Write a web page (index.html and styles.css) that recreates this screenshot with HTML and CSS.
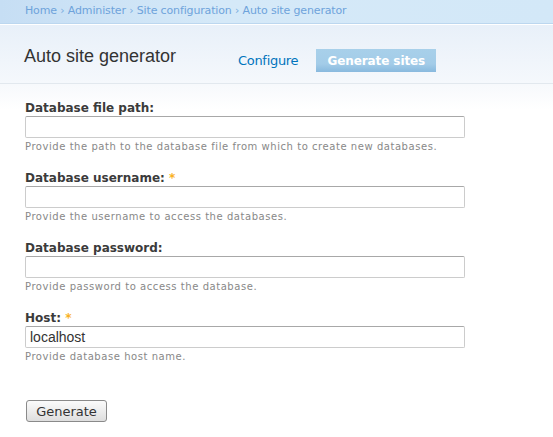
FILE: index.html
```html
<!DOCTYPE html>
<html>
<head>
<meta charset="utf-8">
<link rel="stylesheet" href="styles.css">
</head>
<body>
<div class="breadcrumb">
  <a href="#">Home</a> › <a href="#">Administer</a> › <a href="#">Site configuration</a> › <a href="#">Auto site generator</a>
</div>
<div class="header">
  <h1 class="title">Auto site generator</h1>
  <ul class="tabs">
    <li><a href="#">Configure</a></li>
    <li class="active"><a href="#">Generate sites</a></li>
  </ul>
</div>
<form class="content">
  <div class="item">
    <label class="label">Database file path:</label>
    <input class="text" type="text">
    <div class="desc">Provide the path to the database file from which to create new databases.</div>
  </div>
  <div class="item">
    <label class="label">Database username: <span class="req">*</span></label>
    <input class="text" type="text">
    <div class="desc">Provide the username to access the databases.</div>
  </div>
  <div class="item">
    <label class="label">Database password:</label>
    <input class="text" type="password">
    <div class="desc">Provide password to access the database.</div>
  </div>
  <div class="item">
    <label class="label">Host: <span class="req">*</span></label>
    <input class="text" type="text" value="localhost">
    <div class="desc">Provide database host name.</div>
  </div>
  <div class="actions">
    <button class="btn" type="button">Generate</button>
  </div>
</form>
</body>
</html>
```
FILE: styles.css
```css
html, body {
  margin: 0;
  padding: 0;
}
body {
  background: linear-gradient(to bottom, #f7f9fc 85px, #ffffff 110px);
  font-family: "DejaVu Sans", Verdana, sans-serif;
  color: #333;
  width: 553px;
  height: 437px;
  overflow: hidden;
}
.breadcrumb {
  height: 24px;
  box-sizing: border-box;
  padding: 4px 0 0 25px;
  background: linear-gradient(to right, #c6def4, #d5e9f8 40%, #d3e8f8);
  border-bottom: 1px solid #bcd7ef;
  box-shadow: 0 1px 0 #ffffff;
  font-size: 11px;
  line-height: 13px;
  letter-spacing: -0.15px;
  color: #7aaee0;
}
.breadcrumb a {
  color: #6ea3db;
  text-decoration: none;
}
.header {
  margin-top: 1px;
  height: 59px;
  box-sizing: border-box;
  border-bottom: 1px solid #e2e8ee;
  background: linear-gradient(to bottom, #e8f0f9, #f5f8fc);
  display: flex;
  align-items: flex-start;
  padding-left: 24px;
}
.title {
  margin: 21px 0 0 0;
  font-family: "Liberation Sans", Arial, sans-serif;
  font-weight: normal;
  font-size: 18px;
  line-height: 21px;
  color: #333;
  width: 200px;
}
.tabs {
  list-style: none;
  margin: 24px 0 0 14px;
  padding: 0;
  display: flex;
  gap: 18px;
}
.tabs li a {
  display: block;
  height: 23px;
  box-sizing: border-box;
  padding: 4px 0 0;
  font-size: 13px;
  line-height: 15px;
  color: #0074bd;
  text-decoration: none;
  font-family: "DejaVu Sans", Verdana, sans-serif;
  letter-spacing: -0.3px;
}
.tabs li.active a {
  width: 120px;
  text-align: center;
  padding-top: 5px;
  font-size: 12px;
  line-height: 14px;
  background: linear-gradient(to bottom, #a8d0ea, #a3cce8 65%, #88b9de);
  color: #ffffff;
  font-weight: bold;
  letter-spacing: -0.1px;
}
.content {
  padding: 17px 0 0 25px;
}
.item {
  margin-bottom: 18px;
}
.label {
  display: block;
  font-weight: bold;
  font-size: 12px;
  line-height: 14px;
  color: #3b3b3b;
  margin-bottom: 1px;
}
.req {
  color: #f9b123;
}
.text {
  display: block;
  box-sizing: border-box;
  width: 440px;
  height: 22px;
  margin: 0;
  padding: 1px 4px;
  border: 1px solid #cccccc;
  border-top-color: #a8a8a8;
  border-radius: 2px;
  background: #ffffff;
  font-family: "Liberation Sans", Arial, sans-serif;
  font-size: 14px;
  color: #333;
}
.desc {
  margin-top: 2px;
  font-size: 10px;
  line-height: 13px;
  color: #888888;
  letter-spacing: 0.55px;
}
.actions {
  padding-top: 19px;
}
.btn {
  width: 81px;
  height: 22px;
  margin-left: 1px;
  border: 1px solid #8a8a8a;
  border-radius: 3px;
  background: linear-gradient(to bottom, #fbfbfb, #dedede);
  font-family: "DejaVu Sans", Verdana, sans-serif;
  font-size: 13px;
  color: #333;
  padding: 0;
}
```
